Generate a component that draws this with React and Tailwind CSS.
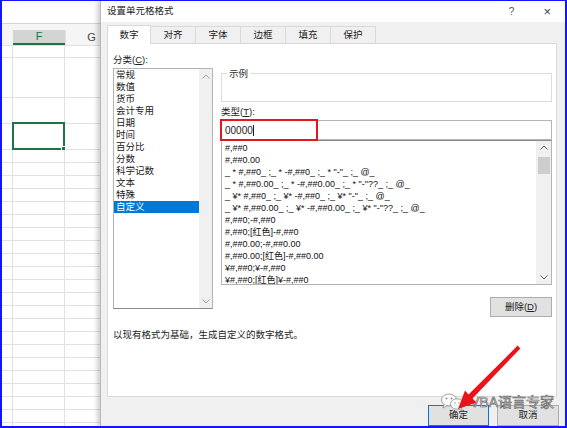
// Excel "设置单元格格式" dialog over a worksheet fragment

const categories = ['常规', '数值', '货币', '会计专用', '日期', '时间', '百分比', '分数', '科学记数', '文本', '特殊', '自定义'];

const formats = [
  '#,##0',
  '#,##0.00',
  '_ * #,##0_ ;_ * -#,##0_ ;_ * "-"_ ;_ @_',
  '_ * #,##0.00_ ;_ * -#,##0.00_ ;_ * "-"??_ ;_ @_',
  '_ ¥* #,##0_ ;_ ¥* -#,##0_ ;_ ¥* "-"_ ;_ @_',
  '_ ¥* #,##0.00_ ;_ ¥* -#,##0.00_ ;_ ¥* "-"??_ ;_ @_',
  '#,##0;-#,##0',
  '#,##0;[红色]-#,##0',
  '#,##0.00;-#,##0.00',
  '#,##0.00;[红色]-#,##0.00',
  '¥#,##0;¥-#,##0',
  '¥#,##0;[红色]¥-#,##0',
];

const tabs = ['数字', '对齐', '字体', '边框', '填充', '保护'];

const rowHeights = ['h-[12px]', 'h-[40px]', 'h-[26px]', 'h-[26px]', ...Array(22).fill('h-[13px]')];

function Chevron({ up, color = '#a0a0a0' }) {
  return (
    <svg width="8" height="5" viewBox="0 0 8 5">
      <path d={up ? 'M0.5 4.5L4 1L7.5 4.5' : 'M0.5 0.5L4 4L7.5 0.5'} fill="none" stroke={color} strokeWidth="1" />
    </svg>
  );
}

function Sheet() {
  return (
    <div className="w-[98px] flex flex-col bg-white overflow-hidden shrink-0">
      <div className="h-[23px] shrink-0 bg-white border-b border-[#d4d4d4]" />
      <div className="h-[22px] shrink-0 flex bg-[#f5f5f5] border-b border-[#e1e1e1]">
        <div className="w-[11px] shrink-0" />
        <div className="w-[52px] shrink-0 mt-[6px] bg-[#d4d4d4] border-b-2 border-[#217346] text-[#217346] text-[11px] leading-[13px] text-center">F</div>
        <div className="w-[52px] shrink-0 mt-[6px] text-[#444] text-[11px] leading-[15px] text-center border-l border-[#e1e1e1]">G</div>
      </div>
      {rowHeights.map((h, i) => (
        <div key={i} className={`${h} shrink-0 flex border-b border-[#e1e1e1]`}>
          <div className="w-[11px] shrink-0 border-r border-[#e1e1e1]" />
          <div className="w-[52px] shrink-0 border-r border-[#e1e1e1] relative">
            {i === 3 && (
              <div className="absolute -top-[2px] -left-[1px] -right-[1px] -bottom-[1px] border-2 border-[#217346]">
                <div className="absolute -right-[3px] -bottom-[3px] w-[5px] h-[5px] bg-[#217346] border border-white" />
              </div>
            )}
          </div>
          <div className="w-[52px] shrink-0" />
        </div>
      ))}
    </div>
  );
}

function Dialog() {
  return (
    <div className="flex-1 flex flex-col bg-[#f0f0f0] border-l border-[#b8b8b8] shadow-[-3px_0_4px_rgba(0,0,0,0.18)] relative z-10">
      {/* title bar */}
      <div className="h-[21px] shrink-0 bg-white flex items-center pl-[6px] pr-[14px] text-[9.5px] text-[#222]">
        <span>设置单元格格式</span>
        <span className="ml-auto text-[#555] text-[10px]">?</span>
        <span className="ml-[29px] text-[#444] text-[13px] leading-none">×</span>
      </div>

      {/* tabs */}
      <div className="flex pl-[6px] pt-[3px] -mb-[1px] relative z-10 text-[9.5px] text-[#222]">
        {tabs.map((t, i) =>
          i === 0 ? (
            <div key={t} className="w-[44px] h-[19px] bg-white border border-b-0 border-[#d9d9d9] flex items-center justify-center">{t}</div>
          ) : (
            <div key={t} className="w-[45px] h-[17px] mt-[1px] border-t border-r border-[#d9d9d9] flex items-center justify-center">{t}</div>
          )
        )}
      </div>

      {/* panel */}
      <div className="ml-[6px] mr-[8px] h-[354px] shrink-0 bg-white border border-[#d9d9d9] flex flex-col pl-[5px] pt-[9px] text-[9.5px] text-[#222]">
        <div className="flex">
          <div className="w-[100px] flex flex-col">
            <div className="h-[14px] leading-[14px]">分类(<span className="underline">C</span>):</div>
            <div className="mt-[1px] h-[241px] border border-[#b4b4b4] border-b-[#8c8c8c] flex">
              <div className="flex-1">
                {categories.map((c, i) => (
                  <div key={c} className={`h-[12px] leading-[12px] pl-[2px] ${i === categories.length - 1 ? 'bg-[#0078d7] text-white' : ''}`}>{c}</div>
                ))}
              </div>
              <div className="w-[13px] bg-[#f0f0f0] flex flex-col items-center justify-between pt-[5px] pb-[4px]">
                <Chevron up />
                <Chevron />
              </div>
            </div>
          </div>

          <div className="ml-[8px] w-[331px] flex flex-col">
            <div className="relative mt-[20px] h-[29px] border border-[#dcdcdc]">
              <span className="absolute -top-[6px] left-[5px] bg-white px-[2px] leading-[12px] text-[#333]">示例</span>
            </div>
            <div className="mt-[3px] h-[14px] leading-[14px]">类型(<span className="underline">T</span>):</div>
            <div className="relative mt-[1px] h-[20px] border border-[#b4b4b4] flex items-center pl-[3px] text-[10px]">
              <span>00000</span>
              <span className="w-px h-[11px] bg-[#222]" />
              <div className="absolute -top-[2px] -left-[2px] w-[98px] h-[22px] border-2 border-[#e5161f]" />
            </div>
            <div className="h-[145px] border border-[#b4b4b4] border-t-[#8c8c8c] flex">
              <div className="flex-1 pt-[1px] pl-[3px] whitespace-pre overflow-hidden text-[9px] text-[#111]">
                {formats.map((f) => (
                  <div key={f} className="h-[12px] leading-[12px]">{f}</div>
                ))}
              </div>
              <div className="w-[15px] bg-[#f0f0f0] flex flex-col items-center pt-[4px] pb-[4px]">
                <Chevron up color="#606060" />
                <div className="mt-[7px] w-[12px] h-[17px] bg-[#cdcdcd]" />
                <div className="flex-1" />
                <Chevron color="#606060" />
              </div>
            </div>
            <div className="self-end mt-[12px] w-[62px] h-[20px] bg-[#e1e1e1] border border-[#adadad] flex items-center justify-center">
              删除(<span className="underline">D</span>)
            </div>
          </div>
        </div>
        <div className="mt-[11px] h-[14px] leading-[14px]">以现有格式为基础，生成自定义的数字格式。</div>
      </div>

      {/* buttons */}
      <div className="flex justify-end gap-[8px] pr-[6px] pt-[8px] text-[9.5px] text-[#222]">
        <div className="w-[61px] h-[21px] bg-[#e1e1e1] border border-[#0078d7] flex items-center justify-center">确定</div>
        <div className="w-[62px] h-[21px] bg-[#e1e1e1] border border-[#adadad] flex items-center justify-center">取消</div>
      </div>
    </div>
  );
}

export default function App() {
  return (
    <div className="relative w-[567px] h-[428px] overflow-hidden flex border-l-2 border-r-2 border-t border-b-2 border-[#1414ff] bg-white font-['Liberation_Sans','Noto_Sans_CJK_SC',sans-serif]">
      <Sheet />
      <Dialog />

      {/* watermark */}
      <div className="absolute left-[438px] top-[391px] z-20 flex items-center pointer-events-none">
        <svg width="26" height="20" viewBox="0 0 26 20">
          <ellipse cx="9" cy="8" rx="7.5" ry="6" fill="white" fillOpacity="0.85" stroke="#8a8a8a" strokeWidth="0.8" />
          <path d="M4 12.5L3 16L7 13.5" fill="white" stroke="#8a8a8a" strokeWidth="0.8" />
          <ellipse cx="17" cy="12" rx="6.5" ry="5.2" fill="white" fillOpacity="0.9" stroke="#8a8a8a" strokeWidth="0.8" />
          <path d="M21 16L22.5 19L18.5 16.8" fill="white" stroke="#8a8a8a" strokeWidth="0.8" />
          <circle cx="6.5" cy="6.5" r="0.9" fill="#8a8a8a" />
          <circle cx="11.5" cy="6.5" r="0.9" fill="#8a8a8a" />
          <circle cx="15" cy="11" r="0.7" fill="#8a8a8a" />
          <circle cx="19" cy="11" r="0.7" fill="#8a8a8a" />
        </svg>
        <span className="ml-[4px] text-[14px] leading-none text-white [-webkit-text-stroke:0.7px_#6a6a6a]">VBA语言专家</span>
      </div>

      {/* red arrow */}
      <svg className="absolute left-0 top-0 z-30 pointer-events-none" width="567" height="428" viewBox="0 0 567 428">
        <polygon
          points="518.4,347.4 470.5,397.5 474.5,401.5 456,408 463,389.5 466.5,393.5 515.6,344.6"
          fill="#e8141c"
        />
      </svg>
    </div>
  );
}
